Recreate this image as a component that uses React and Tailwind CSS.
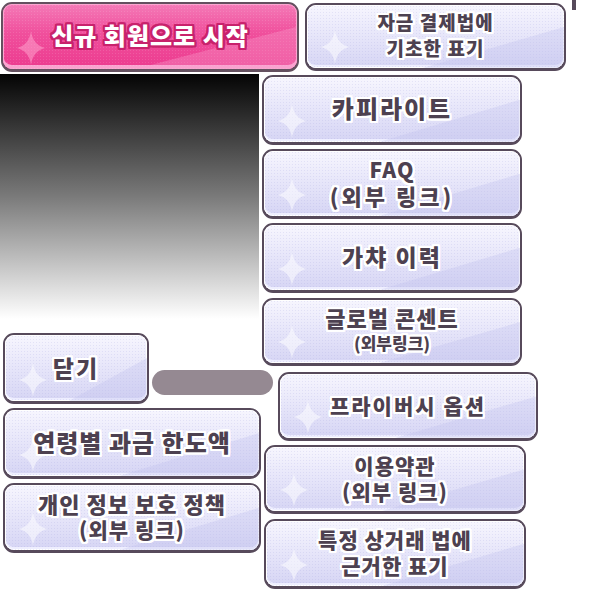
import React from 'react';

const outline =
  '[text-shadow:2px_0_0_#fff,-2px_0_0_#fff,0_2px_0_#fff,0_-2px_0_#fff,2px_2px_0_#fff,-2px_-2px_0_#fff,2px_-2px_0_#fff,-2px_2px_0_#fff,1px_2px_0_#fff,2px_1px_0_#fff,-1px_2px_0_#fff,-2px_1px_0_#fff,1px_-2px_0_#fff,2px_-1px_0_#fff,-1px_-2px_0_#fff,-2px_-1px_0_#fff]';

const pinkOutline =
  '[text-shadow:2px_0_0_#c8226c,-2px_0_0_#c8226c,0_2px_0_#c8226c,0_-2px_0_#c8226c,2px_2px_0_#c8226c,-2px_-2px_0_#c8226c,2px_-2px_0_#c8226c,-2px_2px_0_#c8226c,1px_2px_0_#c8226c,2px_1px_0_#c8226c,-1px_2px_0_#c8226c,-2px_1px_0_#c8226c,1px_-2px_0_#c8226c,2px_-1px_0_#c8226c,-1px_-2px_0_#c8226c,-2px_-1px_0_#c8226c]';

function Band({ color }) {
  return (
    <svg className="absolute inset-0 w-full h-full" preserveAspectRatio="none" viewBox="0 0 100 100">
      <polygon points="45,100 100,35 100,100" fill={color} opacity="0.35" />
    </svg>
  );
}

function Star({ fill }) {
  return (
    <svg className="absolute left-[14px] bottom-[4px] w-[28px] h-[34px]" viewBox="0 0 28 34">
      <path d="M14 0 Q16 14 28 17 Q16 20 14 34 Q12 20 0 17 Q12 14 14 0 Z" fill={fill} />
    </svg>
  );
}

function SheetButton({ className = '', lines }) {
  return (
    <div className={`shrink-0 rounded-[11px] border-2 border-b-[3px] border-[#574a5b] bg-[#574a5b] ${className}`}>
      <div className="relative w-full h-full rounded-[9px] overflow-hidden bg-[linear-gradient(180deg,#f7f6fe_0%,#e8e7fa_45%,#d6d5f4_100%)] shadow-[inset_0_0_0_1px_#ffffff,inset_0_-3px_0_#eeeeff]">
        <div className="absolute inset-0 bg-[radial-gradient(circle,rgba(150,150,220,0.18)_1px,transparent_1px)] bg-[length:3px_3px]" />
        <Band color="#c4c3ee" />
        <Star fill="rgba(255,255,255,0.5)" />
        <div className="relative flex flex-col items-center justify-center h-full pb-[3px] font-['Noto_Sans_CJK_KR',sans-serif] font-black text-[#4d4150]">
          {lines.map(([t, cls]) => (
            <div key={t} className={`leading-[26px] whitespace-nowrap ${cls} ${outline}`}>
              {t}
            </div>
          ))}
        </div>
      </div>
    </div>
  );
}

export default function App() {
  return (
    <div className="w-[590px] h-[590px] bg-white overflow-hidden flex flex-col">
      {/* top row */}
      <div className="flex items-start gap-[6px] pt-[2px] pl-[1px]">
        <div className="w-[298px] h-[70px] rounded-[11px] border-2 border-b-[3px] border-[#64505f] bg-[#64505f]">
          <div className="relative w-full h-full rounded-[9px] overflow-hidden bg-[linear-gradient(180deg,#f47ab7_0%,#f04f9c_45%,#ec3b8f_100%)] shadow-[inset_0_0_0_1px_#fba6d0,inset_0_-4px_0_#f9a3cf]">
            <div className="absolute inset-0 bg-[radial-gradient(circle,rgba(255,255,255,0.12)_1px,transparent_1px)] bg-[length:3px_3px]" />
            <Band color="#f9a0cd" />
            <Star fill="rgba(255,170,210,0.5)" />
            <div className="relative flex items-center justify-center h-full pb-[3px] font-['Noto_Sans_CJK_KR',sans-serif] font-black text-white text-[24px] tracking-[1px] whitespace-nowrap">
              <span className={pinkOutline}>신규 회원으로 시작</span>
            </div>
          </div>
        </div>
        <SheetButton
          className="w-[261px] h-[68px] mt-[1px]"
          lines={[['자금 결제법에', 'text-[19px] tracking-[1px]'], ['기초한 표기', 'text-[19px] tracking-[1px]']]}
        />
        <div className="w-[4px] h-[10px] -mt-[2px] bg-[#574a5b]" />
      </div>

      {/* lower part */}
      <div className="flex items-start mt-[2px]">
        {/* left column */}
        <div className="w-[262px] shrink-0 flex flex-col">
          <div className="w-[259px] h-[245px] bg-[linear-gradient(180deg,#040404_0%,#7a7a7a_50%,#ffffff_100%)]" />
          <div className="flex items-start gap-[3px] ml-[3px] mt-[14px]">
            <SheetButton className="w-[146px] h-[71px]" lines={[['닫기', 'text-[23px] tracking-[2px]']]} />
            <div className="w-[121px] h-[25px] mt-[37px] shrink-0 rounded-full bg-[#958992]" />
          </div>
          <SheetButton
            className="w-[258px] h-[71px] ml-[3px] mt-[4px]"
            lines={[['연령별 과금 한도액', 'text-[24px] tracking-[1px]']]}
          />
          <SheetButton
            className="w-[258px] h-[70px] ml-[3px] mt-[4px]"
            lines={[['개인 정보 보호 정책', 'text-[22px] tracking-[1px]'], ['(외부 링크)', 'text-[21px] tracking-[1px]']]}
          />
        </div>

        {/* right column */}
        <div className="flex flex-col mt-[1px]">
          <SheetButton className="w-[260px] h-[70px]" lines={[['카피라이트', 'text-[24px] tracking-[2px]']]} />
          <SheetButton
            className="w-[260px] h-[70px] mt-[4px]"
            lines={[['FAQ', 'text-[21px] tracking-[1px]'], ['(외부 링크)', 'text-[22px] tracking-[3px]']]}
          />
          <SheetButton className="w-[260px] h-[70px] mt-[4px]" lines={[['가챠 이력', 'text-[23px] tracking-[2px]']]} />
          <SheetButton
            className="w-[260px] h-[68px] mt-[5px]"
            lines={[['글로벌 콘센트', 'text-[22px] tracking-[1px]'], ['(외부링크)', 'text-[17px] tracking-[0px] leading-[20px]']]}
          />
          <SheetButton
            className="w-[260px] h-[69px] mt-[6px] ml-[16px]"
            lines={[['프라이버시 옵션', 'text-[21px] tracking-[2px]']]}
          />
          <SheetButton
            className="w-[262px] h-[69px] mt-[4px] ml-[2px]"
            lines={[['이용약관', 'text-[21px] tracking-[1px]'], ['(외부 링크)', 'text-[21px] tracking-[1px]']]}
          />
          <SheetButton
            className="w-[262px] h-[70px] mt-[5px] ml-[2px]"
            lines={[['특정 상거래 법에', 'text-[21px] tracking-[1px]'], ['근거한 표기', 'text-[21px] tracking-[1px]']]}
          />
        </div>
      </div>
    </div>
  );
}
